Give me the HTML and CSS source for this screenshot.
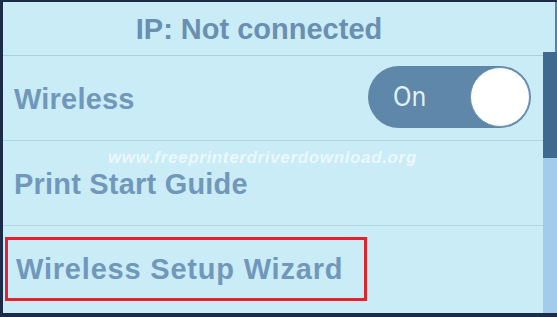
FILE: index.html
```html
<!DOCTYPE html>
<html>
<head>
<meta charset="utf-8">
<link rel="stylesheet" href="styles.css">
</head>
<body>
<div class="screen">
  <div class="main">
    <div class="header">IP: Not connected</div>
    <div class="row">
      <span class="label">Wireless</span>
      <div class="toggle">
        <span class="toggle-text">On</span>
        <span class="knob"></span>
      </div>
    </div>
    <div class="row">
      <span class="label">Print Start Guide</span>
    </div>
    <div class="row">
      <span class="label wide">Wireless Setup Wizard</span>
    </div>
  </div>
  <div class="scrollbar">
    <div class="scroll-top"></div>
    <div class="thumb"></div>
    <div class="track"></div>
  </div>
  <div class="watermark">www.freeprinterdriverdownload.org</div>
  <div class="highlight"></div>
</div>
</body>
</html>
```

FILE: styles.css
```css
html, body {
  margin: 0;
  padding: 0;
  background: #1c2c48;
}
.screen {
  position: relative;
  width: 554px;
  height: 311px;
  margin-top: 2px;
  margin-left: 3px;
  background: #c9ecf7;
  display: flex;
  font-family: "Liberation Sans", Arial, sans-serif;
  color: #6d93b6;
}
.main {
  flex: 1;
  display: flex;
  flex-direction: column;
}
.header {
  height: 54px;
  border-bottom: 1px solid #a9cfe0;
  display: flex;
  align-items: center;
  justify-content: center;
  font-size: 29px;
  font-weight: bold;
  color: #6a8fb0;
  padding: 2px 28px 0 0;
  box-sizing: border-box;
}
.row {
  height: 85px;
  border-bottom: 1px solid #b0d6e6;
  display: flex;
  align-items: center;
  justify-content: space-between;
  padding: 2px 12px 0 11px;
  box-sizing: border-box;
}
.row:last-child {
  border-bottom: none;
  flex: 1;
  padding-top: 0;
}
.label {
  font-size: 29px;
  font-weight: bold;
  color: #7198bb;
  letter-spacing: 0.2px;
}
.label.wide {
  letter-spacing: 0.8px;
  padding-left: 2px;
}
.toggle {
  width: 163px;
  height: 62px;
  border-radius: 31px;
  background: #5f87a9;
  display: flex;
  align-items: center;
  justify-content: space-between;
  padding: 0 1px 0 25px;
  box-sizing: border-box;
  margin-top: -4px;
}
.toggle-text {
  font-size: 26px;
  color: #dff2fb;
  font-family: "DejaVu Sans Condensed", "DejaVu Sans", sans-serif;
}
.knob {
  width: 60px;
  height: 60px;
  border-radius: 50%;
  background: #ffffff;
  border: 1.5px solid #6f94b4;
  box-sizing: border-box;
}
.scrollbar {
  width: 14px;
  display: flex;
  flex-direction: column;
}
.scroll-top {
  height: 50px;
  border-right: 2px solid #5a7fa8;
}
.thumb {
  height: 106px;
  background: #3f6a8e;
}
.track {
  flex: 1;
  background: #a3cbec;
}
.watermark {
  position: absolute;
  left: 105px;
  top: 146px;
  font-family: "Liberation Sans", Arial, sans-serif;
  font-weight: bold;
  font-style: italic;
  font-size: 17px;
  color: rgba(255, 255, 255, 0.65);
  letter-spacing: 0.65px;
}
.highlight {
  position: absolute;
  left: 2px;
  top: 235px;
  width: 362px;
  height: 64px;
  border: 3px solid #e8202a;
  box-sizing: border-box;
}
```
